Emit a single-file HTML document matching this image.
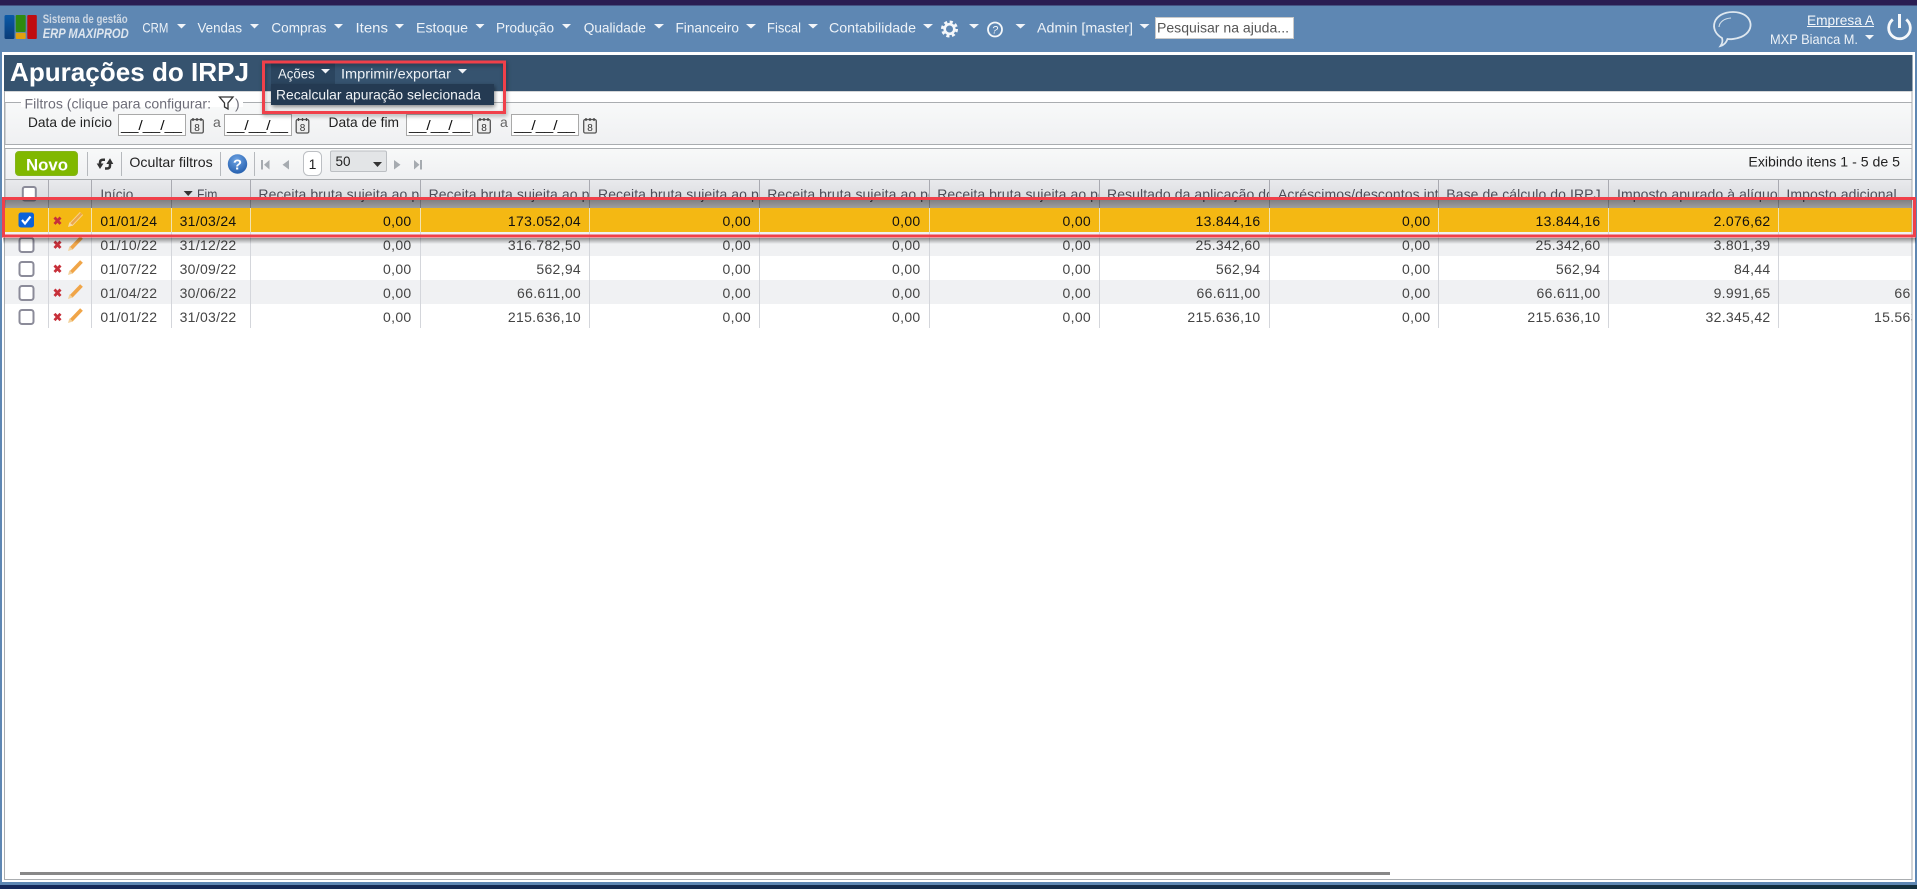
<!DOCTYPE html>
<html lang="pt-BR">
<head>
<meta charset="utf-8">
<title>Apurações do IRPJ</title>
<style>
html,body{margin:0;padding:0;width:1917px;height:889px;overflow:hidden;background:#fff}
svg{display:block}
text{font-family:"Liberation Sans",Arial,sans-serif;font-size:14px}
.nav text{fill:#eef3f8}
.ar{fill:#f2f5f9}
.lab text{fill:#222}
.hd text{fill:#4c4d57;letter-spacing:.08px}
.cell text{fill:#444;letter-spacing:.3px}
.num text{text-anchor:end}
.sel text{fill:#111}
.cal rect{fill:#eee;stroke:#555;stroke-width:1.3}
.inp{fill:#fff;stroke:#a9a9a9}
.mask{fill:#111;font-size:14px}
.pg{fill:#a6abb0}
</style>
</head>
<body>
<svg width="1917" height="889" viewBox="0 0 1917 889" xmlns="http://www.w3.org/2000/svg">
<defs>
<linearGradient id="bot" x1="0" x2="1" y1="0" y2="0"><stop offset="0" stop-color="#16295a"/><stop offset="1" stop-color="#132f3c"/></linearGradient>
<linearGradient id="fil" x1="0" x2="0" y1="0" y2="1"><stop offset="0" stop-color="#f8f9f9"/><stop offset="1" stop-color="#eff0f2"/></linearGradient>
<linearGradient id="hdg" x1="0" x2="0" y1="0" y2="1"><stop offset="0" stop-color="#e9eaed"/><stop offset="1" stop-color="#d6d7db"/></linearGradient>
<linearGradient id="sh1" x1="0" x2="0" y1="0" y2="1"><stop offset="0" stop-color="#000" stop-opacity=".42"/><stop offset="1" stop-color="#000" stop-opacity=".27"/></linearGradient>
<linearGradient id="sh2" x1="0" x2="0" y1="0" y2="1"><stop offset="0" stop-color="#000" stop-opacity=".4"/><stop offset="1" stop-color="#000" stop-opacity="0"/></linearGradient>
<radialGradient id="hb" cx=".45" cy=".3" r=".8"><stop offset="0" stop-color="#6ea4e4"/><stop offset="1" stop-color="#1c57a8"/></radialGradient>
<linearGradient id="lb" x1="0" x2="0" y1="0" y2="1"><stop offset="0" stop-color="#0a5aa8"/><stop offset="1" stop-color="#0a3c78"/></linearGradient>
<clipPath id="lastc"><rect x="1778" y="200" width="133.500" height="130"/></clipPath>
<g id="cal" class="cal"><rect x=".7" y="1.500" width="12.600" height="13.500" rx="1.500"/><path d="M3 0v3M7 0v3M11 0v3" stroke="#444" stroke-width="1.300"/><text x="7" y="13" text-anchor="middle" style="font-size:10px;fill:#333">8</text></g>
<path id="x" d="M-3 -3.200L3 3.200M3 -3.200L-3 3.200" stroke="#c7303a" stroke-width="2.800" fill="none"/>
<g id="pen"><path d="M3 12.500L13.500 1.500" stroke="#f0a548" stroke-width="3.800" fill="none"/><path d="M0 15L1.400 10.200L5 13.500Z" fill="#f3d29c"/></g>
<g id="pens"><path d="M3 12.500L13.500 1.500" stroke="#f7d48e" stroke-width="4.400" fill="none"/><path d="M3 12.500L13.500 1.500" stroke="#eba64a" stroke-width="2.400" fill="none"/><path d="M0 15L1.400 10.200L5 13.500Z" fill="#f7d9a6"/></g>
<g id="cb"><rect x="0" y="0" width="14" height="14" rx="2.500" fill="#fff" stroke="#8b8b99" stroke-width="2"/></g>
</defs>

<!-- frame -->
<rect width="1917" height="889" fill="#5e87b3"/>
<rect width="1917" height="5.500" fill="#2a1d52"/>
<rect y="885" width="1917" height="4" fill="url(#bot)"/>
<rect x="2" y="52" width="1913" height="830" fill="#fff"/>
<rect x="4.500" y="91" width="1907.500" height="788.500" fill="#fff" stroke="#aaadb0"/>

<!-- logo -->
<g>
<rect x="4.500" y="15" width="10" height="24" rx="1.500" fill="url(#lb)"/>
<rect x="15.700" y="15" width="10" height="17" rx="1" fill="#2f8a10"/>
<rect x="15.700" y="32.700" width="10" height="6.300" rx="1" fill="#e0a010"/>
<rect x="27.300" y="15" width="9.500" height="24" rx="1" fill="#c00c10"/>
<text x="42.700" y="23" textLength="85" lengthAdjust="spacingAndGlyphs" style="font-size:12px;font-weight:bold;fill:#ced8e4">Sistema de gestão</text>
<text x="42.700" y="38" textLength="86" lengthAdjust="spacingAndGlyphs" style="font-size:14px;font-weight:bold;font-style:italic;fill:#dde5ee">ERP MAXIPROD</text>
</g>

<!-- nav -->
<g class="nav">
<text x="142.400" y="32.500" textLength="26" lengthAdjust="spacingAndGlyphs">CRM</text>
<text x="197.500" y="32.500" textLength="44.500" lengthAdjust="spacingAndGlyphs">Vendas</text>
<text x="271.400" y="32.500" textLength="55" lengthAdjust="spacingAndGlyphs">Compras</text>
<text x="355.500" y="32.500" textLength="32.500" lengthAdjust="spacingAndGlyphs">Itens</text>
<text x="416" y="32.500" textLength="52" lengthAdjust="spacingAndGlyphs">Estoque</text>
<text x="496" y="32.500" textLength="58" lengthAdjust="spacingAndGlyphs">Produção</text>
<text x="583.700" y="32.500" textLength="62.300" lengthAdjust="spacingAndGlyphs">Qualidade</text>
<text x="675.500" y="32.500" textLength="63.500" lengthAdjust="spacingAndGlyphs">Financeiro</text>
<text x="767" y="32.500" textLength="34" lengthAdjust="spacingAndGlyphs">Fiscal</text>
<text x="829" y="32.500" textLength="87" lengthAdjust="spacingAndGlyphs">Contabilidade</text>
<text x="1037" y="32.500" textLength="96" lengthAdjust="spacingAndGlyphs">Admin [master]</text>
</g>
<g class="ar">
<polygon points="177,24 186,24 181.500,28.500"/>
<polygon points="250,24 259,24 254.500,28.500"/>
<polygon points="334,24 343,24 338.500,28.500"/>
<polygon points="395,24 404,24 399.500,28.500"/>
<polygon points="475.500,24 484.500,24 480,28.500"/>
<polygon points="562,24 571,24 566.500,28.500"/>
<polygon points="654,24 664,24 659,28.500"/>
<polygon points="746,24 756,24 751,28.500"/>
<polygon points="808,24 818,24 813,28.500"/>
<polygon points="923,24 933,24 928,28.500"/>
<polygon points="969,24 979,24 974,28.500"/>
<polygon points="1015.500,24 1025.500,24 1020.500,28.500"/>
<polygon points="1139.500,24 1149.500,24 1144.500,28.500"/>
<polygon points="1865,35 1874,35 1869.500,39.500"/>
</g>
<!-- gear -->
<g fill="none" stroke="#f4f7fa">
<circle cx="949.500" cy="29" r="4.800" stroke-width="2.600"/>
<circle cx="949.500" cy="29" r="7.200" stroke-width="2.600" stroke-dasharray="3.100 2.550"/>
</g>
<!-- help nav -->
<circle cx="995" cy="29.500" r="7" fill="none" stroke="#f4f7fa" stroke-width="1.800"/>
<text x="995" y="33.500" text-anchor="middle" style="font-size:11px;font-style:italic;fill:#f4f7fa">?</text>
<!-- search -->
<rect x="1155.500" y="17.500" width="138" height="21" fill="#fff" stroke="#c9c9c9"/>
<text x="1157" y="32.500" textLength="132" lengthAdjust="spacingAndGlyphs" style="fill:#555">Pesquisar na ajuda...</text>
<!-- right -->
<path d="M1722 38C1708 30 1713 12 1733 12C1752 12 1757 30 1741 37C1736 39 1730 39.500 1727.500 39C1726.500 42 1724 45 1720.500 46C1722.500 43 1723 41 1722 38Z" fill="none" stroke="#dfe8f0" stroke-width="1.800"/>
<path d="M1719 27C1719.500 22 1724 18.500 1731 18" fill="none" stroke="#d4e0ea" stroke-width="1.100"/>
<text x="1807" y="25" textLength="67" lengthAdjust="spacingAndGlyphs" style="fill:#f4f7fa">Empresa A</text>
<line x1="1807" x2="1874" y1="26.500" y2="26.500" stroke="#f4f7fa"/>
<text x="1770" y="44" textLength="88" lengthAdjust="spacingAndGlyphs" style="fill:#eef3f8">MXP Bianca M.</text>
<path d="M1892.800 19.500A10.800 10.800 0 1 0 1906.200 19.500" fill="none" stroke="#f6f8fb" stroke-width="2.800"/>
<line x1="1899.500" x2="1899.500" y1="14" y2="28" stroke="#f6f8fb" stroke-width="3"/>

<!-- title bar -->
<rect x="4" y="55" width="1908.500" height="36" fill="#36536f"/>
<text x="10" y="81" textLength="239" lengthAdjust="spacingAndGlyphs" style="font-size:26px;font-weight:bold;fill:#fff">Apurações do IRPJ</text>
<rect x="271" y="63" width="64" height="28" fill="#2b455f"/>
<text x="278" y="78.500" textLength="36.700" lengthAdjust="spacingAndGlyphs" style="fill:#eef2f6">Ações</text>
<polygon points="321,69 330,69 325.500,73.500" fill="#f2f5f9"/>
<text x="341" y="78.500" textLength="110" lengthAdjust="spacingAndGlyphs" style="fill:#eef2f6">Imprimir/exportar</text>
<polygon points="458,69 467,69 462.500,73.500" fill="#f2f5f9"/>

<!-- filters -->
<rect x="5" y="102.500" width="1907" height="42" fill="url(#fil)" stroke="#aaadb0"/>
<rect x="21" y="97" width="222" height="10" fill="#fff"/>
<text x="24.500" y="108.500" textLength="186.500" lengthAdjust="spacingAndGlyphs" style="fill:#6d6d78">Filtros (clique para configurar:</text>
<path d="M219.500 97H233L228 103V109L224.500 107V103Z" fill="#fff" stroke="#333" stroke-width="1.300"/>
<text x="235" y="108.500" style="fill:#6d6d78">)</text>
<g class="lab">
<text x="28" y="127" textLength="84" lengthAdjust="spacingAndGlyphs">Data de início</text>
<text x="213" y="127" style="fill:#666">a</text>
<text x="328.500" y="127" textLength="70.500" lengthAdjust="spacingAndGlyphs">Data de fim</text>
<text x="500" y="127" style="fill:#666">a</text>
</g>
<rect class="inp" x="118.500" y="114.500" width="67" height="21"/>
<rect class="inp" x="224.500" y="114.500" width="67" height="21"/>
<rect class="inp" x="406.500" y="114.500" width="66" height="21"/>
<rect class="inp" x="511.500" y="114.500" width="67" height="21"/>
<text class="mask" x="121" y="130" textLength="61" lengthAdjust="spacingAndGlyphs">__/__/__</text>
<text class="mask" x="227" y="130" textLength="61" lengthAdjust="spacingAndGlyphs">__/__/__</text>
<text class="mask" x="409" y="130" textLength="61" lengthAdjust="spacingAndGlyphs">__/__/__</text>
<text class="mask" x="514" y="130" textLength="61" lengthAdjust="spacingAndGlyphs">__/__/__</text>
<use href="#cal" x="190" y="118"/>
<use href="#cal" x="295.500" y="118"/>
<use href="#cal" x="477" y="118"/>
<use href="#cal" x="583" y="118"/>

<!-- toolbar -->
<rect x="5" y="148.500" width="1907" height="31" fill="url(#fil)" stroke="#aaadb0"/>
<rect x="15.500" y="151.500" width="62" height="24" rx="3.500" fill="#80b800" stroke="#86b41c"/>
<text x="26" y="170.500" textLength="42" lengthAdjust="spacingAndGlyphs" style="font-size:17px;font-weight:bold;fill:#fff">Novo</text>
<g stroke="#b6b9bd"><line x1="87.500" x2="87.500" y1="152" y2="176"/><line x1="121.500" x2="121.500" y1="152" y2="176"/><line x1="220.500" x2="220.500" y1="152" y2="176"/><line x1="254.500" x2="254.500" y1="152" y2="176"/></g>
<!-- refresh -->
<g fill="none" stroke="#333" stroke-width="2.500"><path d="M100 165V162.500Q100 159.800 103 159.800H105"/><path d="M110 163V165.500Q110 168.500 107 168.500H105"/></g>
<polygon points="96.700,163.500 103.500,163.500 100,169" fill="#333"/>
<polygon points="106.300,164 113.300,164 110,158.300" fill="#333"/>
<text x="129.400" y="167" textLength="83.300" lengthAdjust="spacingAndGlyphs" style="fill:#222">Ocultar filtros</text>
<circle cx="237.500" cy="164" r="9.700" fill="url(#hb)"/>
<text x="237.500" y="169.500" text-anchor="middle" style="font-size:15px;font-weight:bold;fill:#fff">?</text>
<g class="pg">
<rect x="261" y="160" width="2" height="9.500"/><polygon points="269.500,160 269.500,169.500 264,164.700"/>
<polygon points="289,160 289,169.500 282.500,164.700"/>
<polygon points="394,160 394,169.500 400.500,164.700"/>
<polygon points="414,160 414,169.500 419.500,164.700"/><rect x="420" y="160" width="2" height="9.500"/>
</g>
<rect x="303.500" y="151.500" width="18" height="24" rx="5" fill="#fff" stroke="#bcbfc3"/>
<text x="312.500" y="169" text-anchor="middle" style="fill:#222">1</text>
<rect x="330.500" y="151" width="56" height="20.500" rx="1.500" fill="#e3e5e7" stroke="#bcbfc3"/>
<text x="335.500" y="166" textLength="15" lengthAdjust="spacingAndGlyphs" style="fill:#222">50</text>
<polygon points="373,162 382,162 377.500,167" fill="#333"/>
<text x="1748.400" y="166.500" textLength="151.600" lengthAdjust="spacingAndGlyphs" style="fill:#222">Exibindo itens 1 - 5 de 5</text>

<!-- table header -->
<rect x="5" y="179.500" width="1907" height="29" fill="url(#hdg)" stroke="#aaadb0"/>
<g class="hd">
<text x="100.400" y="199" textLength="33" lengthAdjust="spacingAndGlyphs">Início</text>
<polygon points="183.700,191 192.700,191 188.200,196" fill="#333"/>
<text x="197" y="199" textLength="20.500" lengthAdjust="spacingAndGlyphs">Fim</text>
<svg x="250" y="180" width="170" height="28"><text x="8.400" y="19">Receita bruta sujeita ao percentual</text></svg>
<svg x="420" y="180" width="169.500" height="28"><text x="8.600" y="19">Receita bruta sujeita ao percentual</text></svg>
<svg x="589.500" y="180" width="170" height="28"><text x="8.500" y="19">Receita bruta sujeita ao percentual</text></svg>
<svg x="759.500" y="180" width="170" height="28"><text x="7.700" y="19">Receita bruta sujeita ao percentual</text></svg>
<svg x="929.500" y="180" width="170" height="28"><text x="7.700" y="19">Receita bruta sujeita ao percentual</text></svg>
<svg x="1099.500" y="180" width="170" height="28"><text x="7.500" y="19">Resultado da aplicação do percentual</text></svg>
<svg x="1269.500" y="180" width="168.500" height="28"><text x="8.500" y="19">Acréscimos/descontos internos</text></svg>
<svg x="1438" y="180" width="170" height="28"><text x="8.300" y="19">Base de cálculo do IRPJ</text></svg>
<svg x="1608" y="180" width="170" height="28"><text x="9" y="19">Imposto apurado à alíquota</text></svg>
<svg x="1778" y="180" width="133" height="28"><text x="8.400" y="19">Imposto adicional</text></svg>
</g>
<rect x="22.800" y="187" width="13" height="13.500" rx="2" fill="#fff" stroke="#8b8b99" stroke-width="2"/>

<!-- rows -->
<rect x="5" y="232" width="1906.500" height="24" fill="#f0f1f3"/>
<rect x="5" y="256" width="1906.500" height="24" fill="#fff"/>
<rect x="5" y="280" width="1906.500" height="24" fill="#f0f1f3"/>
<rect x="5" y="304" width="1906.500" height="24" fill="#fff"/>
<rect x="5" y="208" width="1906.500" height="24" fill="#f4b813"/>

<!-- column lines -->
<g stroke="#a9aab1">
<line x1="48.500" x2="48.500" y1="180" y2="208"/><line x1="91.500" x2="91.500" y1="180" y2="208"/><line x1="171.500" x2="171.500" y1="180" y2="208"/><line x1="250.500" x2="250.500" y1="180" y2="208"/><line x1="420.500" x2="420.500" y1="180" y2="208"/><line x1="589.500" x2="589.500" y1="180" y2="208"/><line x1="759.500" x2="759.500" y1="180" y2="208"/><line x1="929.500" x2="929.500" y1="180" y2="208"/><line x1="1099.500" x2="1099.500" y1="180" y2="208"/><line x1="1269.500" x2="1269.500" y1="180" y2="208"/><line x1="1438.500" x2="1438.500" y1="180" y2="208"/><line x1="1608.500" x2="1608.500" y1="180" y2="208"/><line x1="1778.500" x2="1778.500" y1="180" y2="208"/>
</g>
<g stroke="#d4d6db">
<line x1="48.500" x2="48.500" y1="232" y2="328"/><line x1="91.500" x2="91.500" y1="232" y2="328"/><line x1="171.500" x2="171.500" y1="232" y2="328"/><line x1="250.500" x2="250.500" y1="232" y2="328"/><line x1="420.500" x2="420.500" y1="232" y2="328"/><line x1="589.500" x2="589.500" y1="232" y2="328"/><line x1="759.500" x2="759.500" y1="232" y2="328"/><line x1="929.500" x2="929.500" y1="232" y2="328"/><line x1="1099.500" x2="1099.500" y1="232" y2="328"/><line x1="1269.500" x2="1269.500" y1="232" y2="328"/><line x1="1438.500" x2="1438.500" y1="232" y2="328"/><line x1="1608.500" x2="1608.500" y1="232" y2="328"/><line x1="1778.500" x2="1778.500" y1="232" y2="328"/>
</g>
<g stroke="#f2e3b0">
<line x1="48.500" x2="48.500" y1="208" y2="232"/><line x1="91.500" x2="91.500" y1="208" y2="232"/><line x1="171.500" x2="171.500" y1="208" y2="232"/><line x1="250.500" x2="250.500" y1="208" y2="232"/><line x1="420.500" x2="420.500" y1="208" y2="232"/><line x1="589.500" x2="589.500" y1="208" y2="232"/><line x1="759.500" x2="759.500" y1="208" y2="232"/><line x1="929.500" x2="929.500" y1="208" y2="232"/><line x1="1099.500" x2="1099.500" y1="208" y2="232"/><line x1="1269.500" x2="1269.500" y1="208" y2="232"/><line x1="1438.500" x2="1438.500" y1="208" y2="232"/><line x1="1608.500" x2="1608.500" y1="208" y2="232"/><line x1="1778.500" x2="1778.500" y1="208" y2="232"/>
</g>

<!-- row icons -->
<rect x="18.500" y="212.500" width="15.500" height="15" rx="2.500" fill="#0b62d8"/>
<path d="M22 220L25 223.500L30.500 216.500" fill="none" stroke="#fff" stroke-width="2.200"/>
<use href="#cb" x="19.500" y="238"/><use href="#cb" x="19.500" y="262"/><use href="#cb" x="19.500" y="286"/><use href="#cb" x="19.500" y="310"/>
<use href="#x" x="57.500" y="220.700"/><use href="#x" x="57.500" y="244.700"/><use href="#x" x="57.500" y="268.700"/><use href="#x" x="57.500" y="292.700"/><use href="#x" x="57.500" y="317"/>
<use href="#pens" x="68" y="212"/><use href="#pen" x="68" y="236"/><use href="#pen" x="68" y="260"/><use href="#pen" x="68" y="284"/><use href="#pen" x="68" y="308"/>

<!-- row 1 -->
<g class="cell sel">
<text x="100.400" y="226">01/01/24</text><text x="179.600" y="226">31/03/24</text>
<g class="num">
<text x="411.500" y="226">0,00</text><text x="581" y="226">173.052,04</text><text x="751" y="226">0,00</text><text x="920.500" y="226">0,00</text><text x="1091" y="226">0,00</text><text x="1260.500" y="226">13.844,16</text><text x="1430.500" y="226">0,00</text><text x="1600.500" y="226">13.844,16</text><text x="1770.500" y="226">2.076,62</text>
</g></g>
<!-- row 2 -->
<g class="cell">
<text x="100.400" y="250">01/10/22</text><text x="179.600" y="250">31/12/22</text>
<g class="num">
<text x="411.500" y="250">0,00</text><text x="581" y="250">316.782,50</text><text x="751" y="250">0,00</text><text x="920.500" y="250">0,00</text><text x="1091" y="250">0,00</text><text x="1260.500" y="250">25.342,60</text><text x="1430.500" y="250">0,00</text><text x="1600.500" y="250">25.342,60</text><text x="1770.500" y="250">3.801,39</text>
</g></g>
<!-- row 3 -->
<g class="cell">
<text x="100.400" y="274">01/07/22</text><text x="179.600" y="274">30/09/22</text>
<g class="num">
<text x="411.500" y="274">0,00</text><text x="581" y="274">562,94</text><text x="751" y="274">0,00</text><text x="920.500" y="274">0,00</text><text x="1091" y="274">0,00</text><text x="1260.500" y="274">562,94</text><text x="1430.500" y="274">0,00</text><text x="1600.500" y="274">562,94</text><text x="1770.500" y="274">84,44</text>
</g></g>
<!-- row 4 -->
<g class="cell">
<text x="100.400" y="298">01/04/22</text><text x="179.600" y="298">30/06/22</text>
<g class="num">
<text x="411.500" y="298">0,00</text><text x="581" y="298">66.611,00</text><text x="751" y="298">0,00</text><text x="920.500" y="298">0,00</text><text x="1091" y="298">0,00</text><text x="1260.500" y="298">66.611,00</text><text x="1430.500" y="298">0,00</text><text x="1600.500" y="298">66.611,00</text><text x="1770.500" y="298">9.991,65</text>
<g clip-path="url(#lastc)"><text x="1939" y="298">661,10</text></g>
</g></g>
<!-- row 5 -->
<g class="cell">
<text x="100.400" y="322">01/01/22</text><text x="179.600" y="322">31/03/22</text>
<g class="num">
<text x="411.500" y="322">0,00</text><text x="581" y="322">215.636,10</text><text x="751" y="322">0,00</text><text x="920.500" y="322">0,00</text><text x="1091" y="322">0,00</text><text x="1260.500" y="322">215.636,10</text><text x="1430.500" y="322">0,00</text><text x="1600.500" y="322">215.636,10</text><text x="1770.500" y="322">32.345,42</text>
<g clip-path="url(#lastc)"><text x="1939" y="322">15.563,61</text></g>
</g></g>

<!-- annotation shadows + red box around row -->
<rect x="5" y="200" width="1907" height="8" fill="url(#sh1)"/>
<rect x="3" y="238" width="1913" height="6" fill="url(#sh2)"/>
<rect x="3.500" y="198.500" width="1911" height="37.500" fill="none" stroke="#f0404a" stroke-width="3"/>

<!-- dropdown + red box -->
<rect x="271" y="84" width="223" height="21" fill="#243a52" style="filter:drop-shadow(1px 2px 2px rgba(0,0,0,.45))"/>
<text x="276" y="99.500" textLength="205" lengthAdjust="spacingAndGlyphs" style="fill:#f0f3f6">Recalcular apuração selecionada</text>
<rect x="263.500" y="62" width="241" height="50.500" fill="none" stroke="#f0404a" stroke-width="3" style="filter:drop-shadow(1px 2px 2px rgba(0,0,0,.35))"/>

<!-- scrollbar -->
<rect x="20" y="872" width="1370" height="3" fill="#888"/>
</svg>
</body>
</html>
